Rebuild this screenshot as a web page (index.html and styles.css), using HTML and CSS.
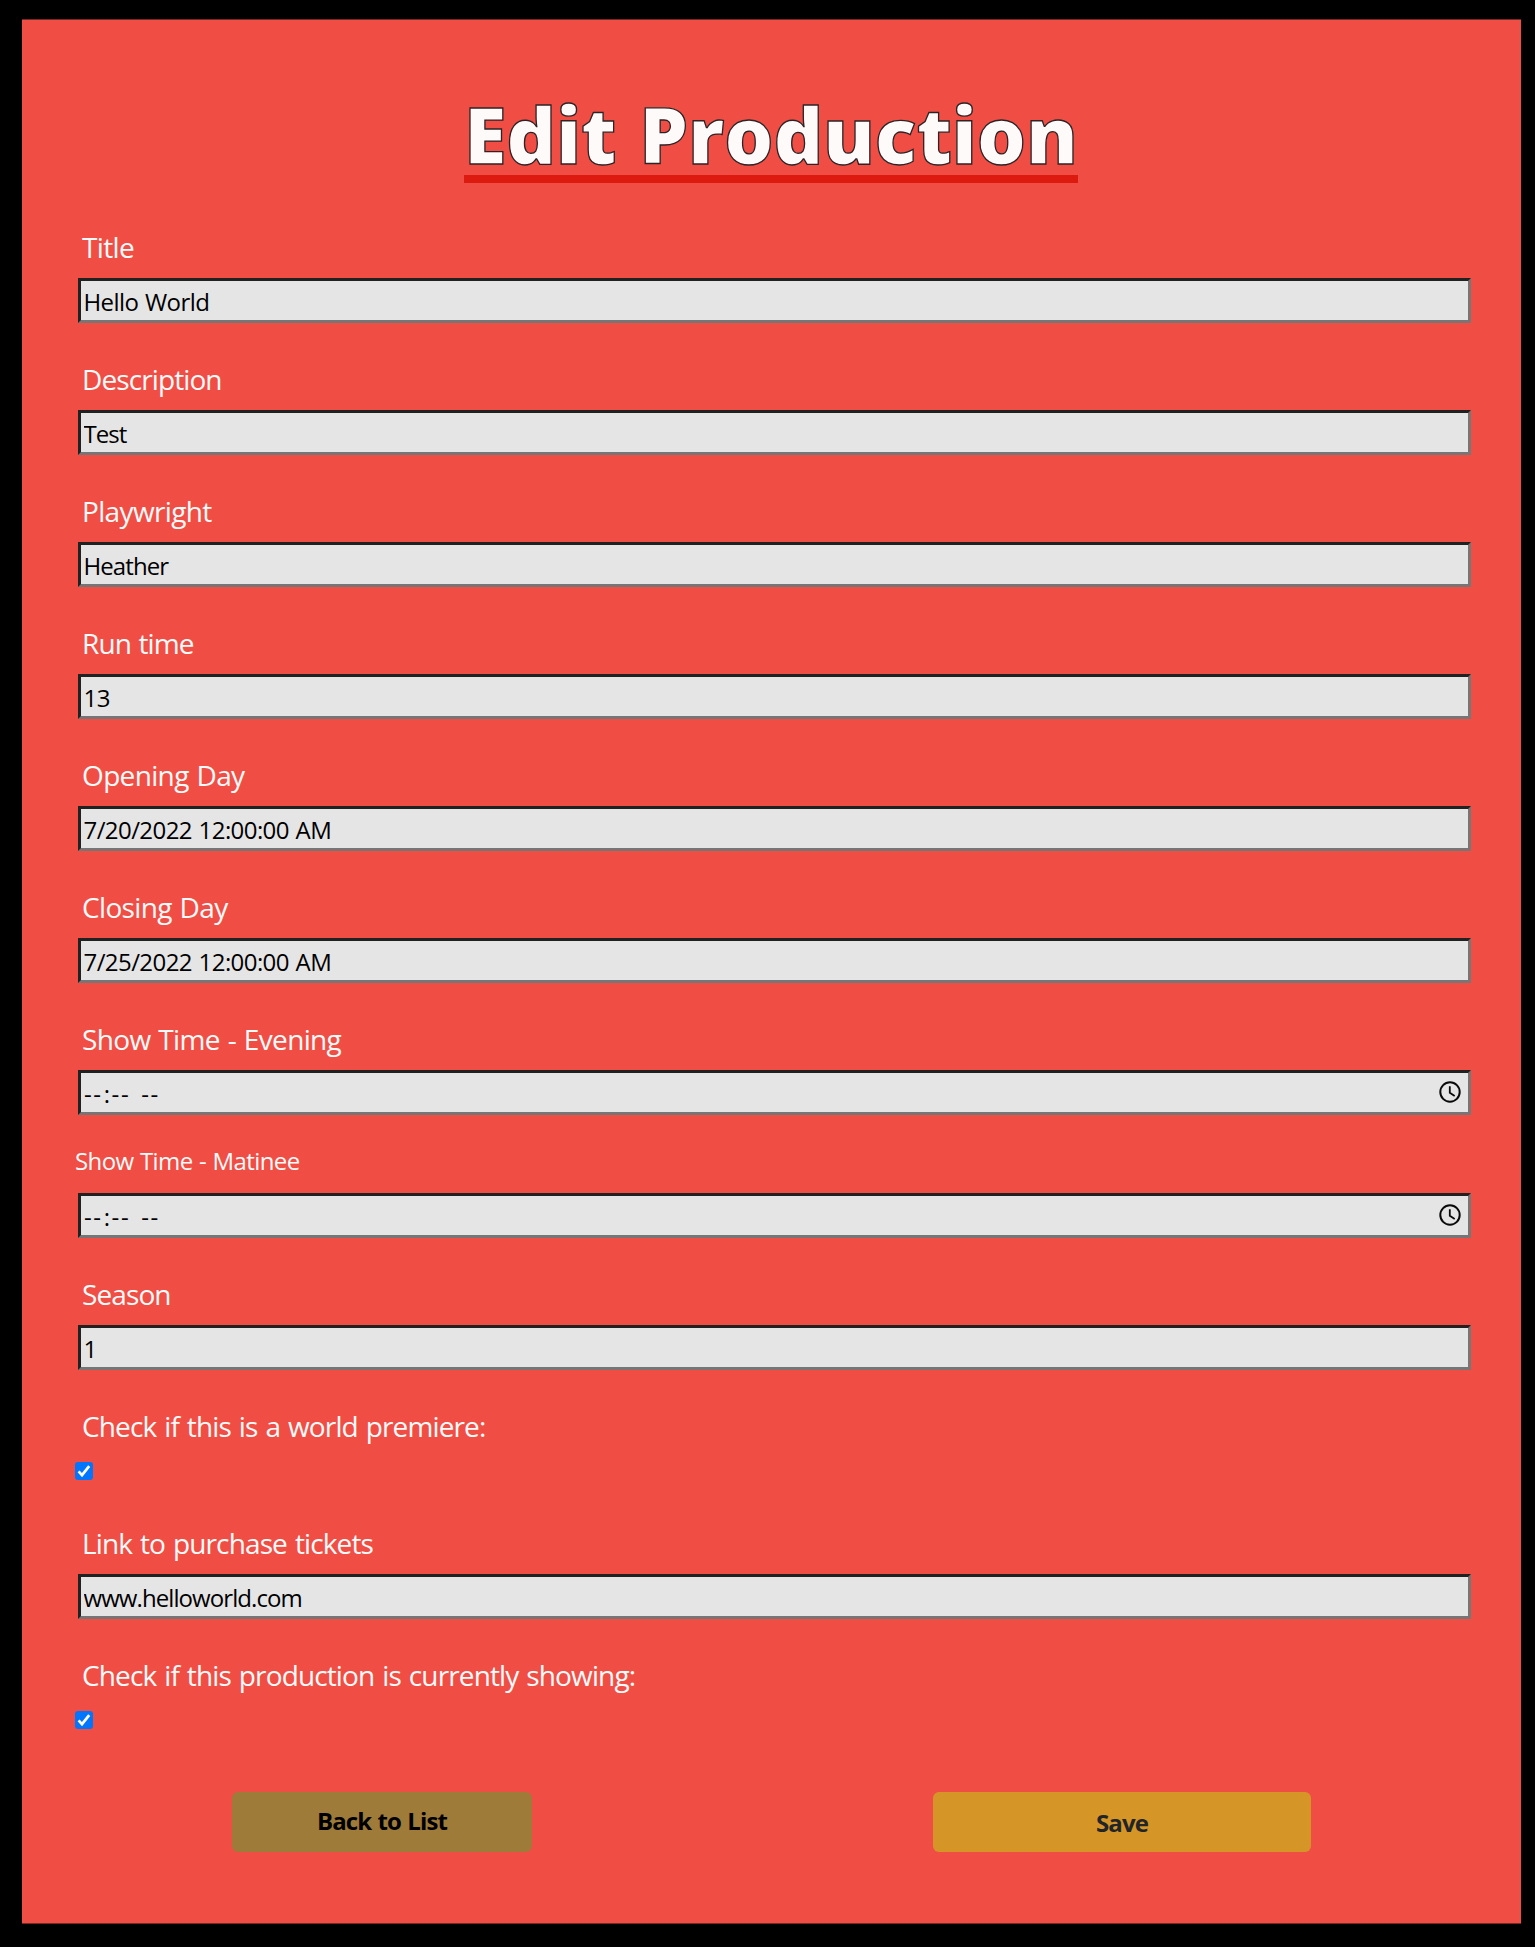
FILE: index.html
```html
<!DOCTYPE html>
<html lang="en">
<head>
<meta charset="utf-8">
<title>Edit Production</title>
<link rel="stylesheet" href="styles.css">
</head>
<body>
<main class="panel">
  <h1 class="heading">Edit Production</h1>
  <form class="form">
    <div class="field">
      <label class="label" for="title">Title</label>
      <input class="input" id="title" type="text" value="Hello World">
    </div>
    <div class="field">
      <label class="label label-tight" for="description">Description</label>
      <input class="input input-tight" id="description" type="text" value="Test">
    </div>
    <div class="field">
      <label class="label" for="playwright">Playwright</label>
      <input class="input input-tight" id="playwright" type="text" value="Heather">
    </div>
    <div class="field">
      <label class="label label-tight" for="runtime">Run time</label>
      <input class="input" id="runtime" type="text" value="13">
    </div>
    <div class="field">
      <label class="label" for="opening">Opening Day</label>
      <input class="input" id="opening" type="text" value="7/20/2022 12:00:00 AM">
    </div>
    <div class="field">
      <label class="label" for="closing">Closing Day</label>
      <input class="input" id="closing" type="text" value="7/25/2022 12:00:00 AM">
    </div>
    <div class="field">
      <span class="label">Show Time - Evening</span>
      <div class="input time">
        <span class="time-text"><span>--</span><span class="colon">:</span><span>--</span><span class="meridiem">--</span></span>
        <svg class="clock" viewBox="0 0 22 22"><circle cx="11" cy="11" r="9.7"/><path d="M10.8 5.3v6.4l4.9 3.2"/></svg>
      </div>
    </div>
    <div class="field field-compact">
      <span class="label label-small">Show Time - Matinee</span>
      <div class="input time">
        <span class="time-text"><span>--</span><span class="colon">:</span><span>--</span><span class="meridiem">--</span></span>
        <svg class="clock" viewBox="0 0 22 22"><circle cx="11" cy="11" r="9.7"/><path d="M10.8 5.3v6.4l4.9 3.2"/></svg>
      </div>
    </div>
    <div class="field">
      <label class="label label-tight" for="season">Season</label>
      <input class="input" id="season" type="text" value="1">
    </div>
    <div class="field field-check">
      <span class="label label-long">Check if this is a world premiere:</span>
      <svg class="check" viewBox="0 0 18 18"><rect width="18" height="18" rx="3"/><path d="M3.6 9.4l3.4 3.7 7.2-8.9"/></svg>
    </div>
    <div class="field">
      <label class="label label-long" for="link">Link to purchase tickets</label>
      <input class="input input-tight" id="link" type="text" value="www.helloworld.com">
    </div>
    <div class="field field-check">
      <span class="label label-long">Check if this production is currently showing:</span>
      <svg class="check" viewBox="0 0 18 18"><rect width="18" height="18" rx="3"/><path d="M3.6 9.4l3.4 3.7 7.2-8.9"/></svg>
    </div>
    <div class="actions">
      <a class="button back">Back to List</a>
      <button class="button save" type="button">Save</button>
    </div>
  </form>
</main>
</body>
</html>
```

FILE: styles.css
```css
* { box-sizing: border-box; }

body {
  margin: 0;
  padding: 19px 14px 23px 22px;
  background: #000;
  color: #fffafa;
  font-family: "Open Sans", "Noto Sans", sans-serif;
}

.panel {
  display: flex;
  flex-direction: column;
  height: 1905px;
  padding: 70px 50px 0 53px;
  background: #f04e45;
  border-top: 1px solid #7a2823;
  border-bottom: 1px solid #7a2823;
}

.heading {
  width: 614px;
  height: 93px;
  margin: 0 0 8px 389px;
  border-bottom: 8px solid #dc1a10;
  font-size: 77.5px;
  font-weight: 900;
  line-height: 88px;
  letter-spacing: -0.2px;
  word-spacing: 3px;
  white-space: nowrap;
  -webkit-text-stroke: 1.3px #2b2325;
}

.form {
  display: flex;
  flex-direction: column;
}

.field {
  display: flex;
  flex-direction: column;
  height: 132px;
}

.label {
  height: 87px;
  padding: 35px 0 0 7px;
  font-size: 28px;
  line-height: 42px;
  letter-spacing: -0.65px;
  word-spacing: 1.2px;
  white-space: nowrap;
}

.label-tight {
  letter-spacing: -0.9px;
}

.label-long {
  letter-spacing: -0.87px;
  word-spacing: 1.5px;
}

.input {
  width: 1393px;
  height: 45px;
  margin: 0 0 0 3px;
  padding: 2px 3px 0 2.5px;
  border: 3px solid;
  border-color: #212121 #767676 #767676 #212121;
  border-radius: 0;
  background: #e5e5e5;
  color: #000;
  font-family: inherit;
  font-size: 24px;
  letter-spacing: -0.58px;
  word-spacing: 1px;
}

.input-tight { letter-spacing: -0.92px; }

.field-compact { height: 123px; }

.label-small {
  height: 78px;
  padding: 28px 0 0;
  font-size: 24px;
  line-height: 36px;
  letter-spacing: -0.6px;
  word-spacing: 0.8px;
}

.time {
  display: flex;
  align-items: center;
  justify-content: space-between;
  padding: 0 7px 0 3px;
}

.time-text {
  display: flex;
  padding-top: 2px;
  letter-spacing: 1.6px;
}

.colon { padding: 0 0 0 1px; }

.meridiem { margin-left: 11px; }

.clock {
  width: 22px;
  height: 22px;
  margin-top: -1px;
  fill: none;
  stroke: #0a0a0a;
  stroke-width: 2;
}

.clock path { stroke-width: 1.8; }

.field-check { height: 117px; }

.field-check .label { height: 92px; }

.check {
  width: 18px;
  height: 18px;
  fill: #0075ff;
}

.check path {
  fill: none;
  stroke: #fff;
  stroke-width: 2.7;
}

.actions {
  display: flex;
  gap: 401px;
  padding: 56px 0 0 157px;
}

.button {
  height: 60px;
  border: 0;
  border-radius: 6px;
  font-family: inherit;
  font-size: 24px;
  font-weight: 700;
  text-align: center;
  letter-spacing: -0.9px;
  word-spacing: 1px;
}

.back {
  width: 300px;
  line-height: 58px;
  background: #9e7b39;
  color: #000;
}

.save {
  width: 378px;
  padding: 1px 0 0;
  background: #d59627;
  color: #212529;
}
```
